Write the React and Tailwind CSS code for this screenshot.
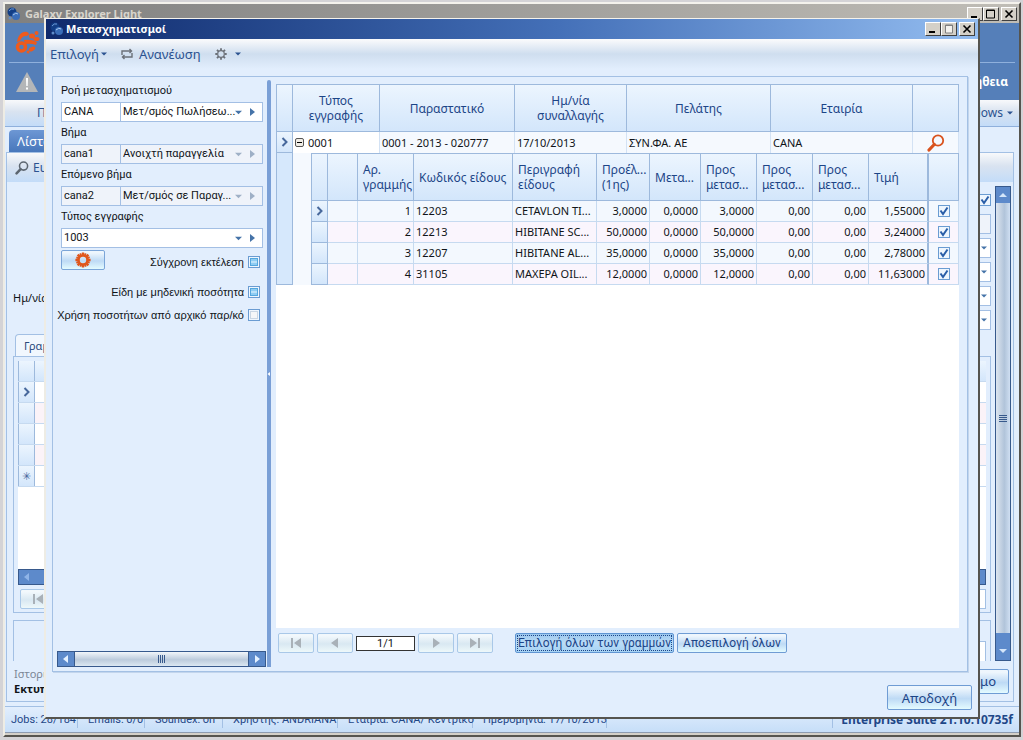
import React from "react";

const orders = [
  ["1", "12203", "CETAVLON TI...", "3,0000", "0,0000", "3,0000", "0,00", "0,00", "1,55000"],
  ["2", "12213", "HIBITANE SC...", "50,0000", "0,0000", "50,0000", "0,00", "0,00", "3,24000"],
  ["3", "12207", "HIBITANE AL...", "35,0000", "0,0000", "35,0000", "0,00", "0,00", "2,78000"],
  ["4", "31105", "MAXEPA OIL...", "12,0000", "0,0000", "12,0000", "0,00", "0,00", "11,63000"],
];

const headFill = "bg-linear-to-b from-[#ecf5fe] to-[#d3e6fb]";
const glossy = "bg-linear-to-b from-[#eef6fd] from-10% via-[#bedaf5] via-55% to-[#e4fbff]";
const disabledFill = "bg-linear-to-b from-[#f2f8fc] from-10% via-[#d9e8f2] via-55% to-[#edf8fa]";
const barFill = "bg-linear-to-b from-[#f8f9fb] via-[#d9e3f0] via-45% to-[#c3dcf8]";

function Globe() {
  return (
    <svg viewBox="0 0 14 14" className="size-3.5 shrink-0" aria-hidden="true">
      <circle cx="5" cy="5" r="4.5" fill="#123e86" />
      <path d="M2 4q2-3 5-2" stroke="#6f9bd8" fill="none" />
      <circle cx="9" cy="9" r="4" fill="#3a6db8" />
      <path d="M6 8q3-3 5-1" stroke="#a9c8ee" fill="none" />
      <circle cx="3" cy="11" r="1.5" fill="#5f8cca" />
    </svg>
  );
}

function WindowButtons({ name, disabledMax }) {
  const cls =
    "grid h-3.5 w-4 place-items-center border border-t-white border-l-white border-r-[#404040] border-b-[#404040] bg-[#d4d0c8]";
  return (
    <div className="flex">
      <button type="button" aria-label={"Ελαχιστοποίηση " + name} className={cls}>
        <svg viewBox="0 0 12 10" className="h-2.5 w-3"><path d="M2 7h6v2H2z" /></svg>
      </button>
      <button type="button" aria-label={"Μεγιστοποίηση " + name} className={cls}>
        <svg viewBox="0 0 12 10" className="h-2.5 w-3">
          {disabledMax ? (
            <path d="M2.500 1v8h7V1zM2 1.500h8" stroke="#808080" fill="#f4f2ee" />
          ) : (
            <path d="M1.500 1v8h8V1zM1 1.500h9" stroke="#000" fill="none" />
          )}
        </svg>
      </button>
      <button type="button" aria-label={"Κλείσιμο " + name} className={cls + " ml-0.5"}>
        <svg viewBox="0 0 12 10" className="h-2.5 w-3"><path d="M2.500 1.500l7 7m0-7l-7 7" stroke="#000" strokeWidth="1.600" /></svg>
      </button>
    </div>
  );
}

function Tri({ dir, className = "size-2" }) {
  const d = {
    down: "M0 2h8L4 6z",
    up: "M0 6h8L4 2z",
    left: "M6 0v8L1 4z",
    right: "M2 0v8l5-4z",
  }[dir];
  return (
    <svg viewBox="0 0 8 8" className={"shrink-0 " + className} aria-hidden="true">
      <path d={d} fill="currentColor" />
    </svg>
  );
}

function Chevron() {
  return (
    <svg viewBox="0 0 8 10" className="mx-auto h-2.5 w-2" aria-hidden="true">
      <path d="M1.500 1l4 4-4 4" fill="none" stroke="#47689c" strokeWidth="2" />
    </svg>
  );
}

function Magnifier({ className, color, width }) {
  return (
    <svg viewBox="0 0 18 18" className={className} aria-hidden="true">
      <circle cx="11" cy="6.500" r="5.200" fill="none" stroke={color} strokeWidth={width} />
      <path d="M7.200 10.500L2 16" stroke={color} strokeWidth="3.200" strokeLinecap="round" />
    </svg>
  );
}

function Gear({ className, color, inner, ring = 3 }) {
  return (
    <svg viewBox="-10 -10 20 20" className={className} aria-hidden="true">
      <circle r={inner} fill="none" stroke={color} strokeWidth={ring} />
      {[0, 45, 90, 135].map((a) => (
        <path key={a} transform={`rotate(${a})`} d="M-1.500-9.500h3v3.500h-3zM-1.500 6h3v3.500h-3z" fill={color} />
      ))}
      {ring >= 3 &&
        [22, 67, 112, 157].map((a) => (
          <path key={a} transform={`rotate(${a})`} d="M-1.200-9h2.400v3h-2.400zM-1.200 6h2.400v3h-2.400z" fill={color} />
        ))}
    </svg>
  );
}

function Tick({ state, label, id }) {
  return (
    <span className="relative grid size-3 shrink-0 place-items-center">
      <input
        id={id}
        type="checkbox"
        aria-label={label}
        defaultChecked={state !== "off"}
        className="size-3 appearance-none border border-[#6a9cd2] bg-[#eef6fe]"
      />
      {state === "on" && (
        <svg viewBox="0 0 12 12" className="pointer-events-none absolute size-3">
          <path d="M2.500 5.500L5 9l4.500-6.500" fill="none" stroke="#2a5ea8" strokeWidth="2" />
        </svg>
      )}
      {state === "mixed" && (
        <svg viewBox="0 0 12 12" className="pointer-events-none absolute size-3">
          <rect x="2.500" y="2.500" width="7" height="7" fill="#8fcdf3" stroke="#54a7de" />
          <path d="M3 6h6" stroke="#e8f7ff" />
        </svg>
      )}
      {state === "off" && (
        <svg viewBox="0 0 12 12" className="pointer-events-none absolute size-3">
          <rect x="2.500" y="2.500" width="7" height="7" fill="#f4f6f8" stroke="#c9d6e4" />
        </svg>
      )}
    </span>
  );
}

function Lookup({ label, id, code, text, muted }) {
  const tone = muted ? "bg-[#eff3fa]" : "bg-white";
  const arrow = muted ? "text-[#9fb0c6]" : "text-[#4573a8]";
  return (
    <div>
      <label htmlFor={id} className="flex h-[22px] items-center">{label}</label>
      <div className={"flex h-5 border border-[#a3bfe4] " + tone}>
        {text && (
          <input
            aria-label={label + " κωδικός"}
            defaultValue={code}
            className="w-[59px] shrink-0 border-r border-[#a3bfe4] px-0.5 outline-none"
          />
        )}
        <div className="relative min-w-0 flex-1">
          <select id={id} className="size-full appearance-none px-0.5 outline-none">
            <option>{text || code}</option>
          </select>
          <Tri dir="down" className={"pointer-events-none absolute top-1.5 right-0 size-[7px] " + arrow} />
        </div>
        <button type="button" aria-label={"Άνοιγμα " + label} className={"grid w-5 shrink-0 place-items-center " + arrow}>
          <Tri dir="right" />
        </button>
      </div>
    </div>
  );
}

function PagerButton({ kind, label }) {
  const d = {
    first: "M1 1h2v10H1zM11 1v10L4 6z",
    prev: "M9 1v10L2 6z",
    next: "M3 1v10l7-5z",
    last: "M9 1h2v10H9zM1 1v10l7-5z",
  }[kind];
  return (
    <button
      type="button"
      aria-label={label}
      className={"grid h-5 w-9 shrink-0 place-items-center rounded-xs border border-[#a9c8e8] text-[#a9b1b8] " + disabledFill}
    >
      <svg viewBox="0 0 12 12" className="size-3"><path d={d} fill="currentColor" /></svg>
    </button>
  );
}

function DetailGrid() {
  const th = "border-t border-r border-b border-[#9db9dc] px-[5px] text-left font-normal " + headFill;
  const td = "h-[21px] border-r border-b border-[#c6daf0] px-0.5 ";
  return (
    <table className="w-full table-fixed border-separate border-spacing-0 border-l border-[#9db9dc]">
      <colgroup>
        <col className="w-4" /><col className="w-[30px]" /><col className="w-14" /><col className="w-[99px]" />
        <col className="w-[84px]" /><col className="w-[53px]" /><col className="w-[51px]" /><col className="w-14" />
        <col className="w-14" /><col className="w-14" /><col className="w-[60px]" /><col className="w-[30px]" />
      </colgroup>
      <thead>
        <tr className="h-12 text-xs leading-[15px] text-[#1c4587]">
          <th className={th} /><th className={th} />
          <th className={th}>Αρ.<br />γραμμής</th>
          <th className={th}>Κωδικός είδους</th>
          <th className={th}>Περιγραφή είδους</th>
          <th className={th}>Προέλ...<br />(1ης)</th>
          <th className={th}>Μετα...</th>
          <th className={th}>Προς<br />μετασ...</th>
          <th className={th}>Προς<br />μετασ...</th>
          <th className={th}>Προς<br />μετασ...</th>
          <th className={th + " border-r-2"}>Τιμή</th>
          <th className={th} />
        </tr>
      </thead>
      <tbody>
        {orders.map((r, i) => (
          <tr key={r[1]} className={i % 2 ? "bg-[#faf5fd]" : "bg-[#f3f8fe]"}>
            <td className={"border-r border-b border-[#9db9dc] " + headFill}>{i === 0 && <Chevron />}</td>
            <td className={td} />
            <td className={td + "text-right"}>{r[0]}</td>
            <td className={td}>{r[1]}</td>
            <td className={td + "whitespace-nowrap overflow-hidden"}>{r[2]}</td>
            <td className={td + "text-right"}>{r[3]}</td>
            <td className={td + "text-right"}>{r[4]}</td>
            <td className={td + "text-right"}>{r[5]}</td>
            <td className={td + "text-right"}>{r[6]}</td>
            <td className={td + "text-right"}>{r[7]}</td>
            <td className="border-r-2 border-b border-r-[#9db9dc] border-b-[#c6daf0] px-0.5 text-right">{r[8]}</td>
            <td className={td}>
              <div className="flex justify-center"><Tick state="on" label={"Επιλογή γραμμής " + r[0]} /></div>
            </td>
          </tr>
        ))}
      </tbody>
    </table>
  );
}

function MasterGrid() {
  const th = "border-t border-r border-b border-[#9db9dc] px-2 text-center font-normal " + headFill;
  const td = "h-[21px] border-r border-[#d3e2f4] bg-[#f5f9fe] px-0.5";
  return (
    <table className="w-full table-fixed border-separate border-spacing-0 border-l border-[#9db9dc]">
      <colgroup>
        <col className="w-4" /><col className="w-[87px]" /><col className="w-[135px]" /><col className="w-28" />
        <col className="w-36" /><col className="w-[142px]" /><col className="w-[46px]" />
      </colgroup>
      <thead>
        <tr className="h-12 text-xs leading-[15px] text-[#1c4587]">
          <th className={th} />
          <th className={th}>Τύπος εγγραφής</th>
          <th className={th}>Παραστατικό</th>
          <th className={th}>Ημ/νία συναλλαγής</th>
          <th className={th}>Πελάτης</th>
          <th className={th}>Εταιρία</th>
          <th className={th} />
        </tr>
      </thead>
      <tbody>
        <tr>
          <td className={"border-r border-b border-[#9db9dc] " + headFill}><Chevron /></td>
          <td className="border-r border-[#d3e2f4] bg-white px-0.5">
            <div className="flex items-center gap-1">
              <button type="button" aria-label="Σύμπτυξη" className="grid size-[9px] place-items-center rounded-xs border border-[#555] bg-[#f0ede6]">
                <span className="h-px w-[5px] bg-black" />
              </button>
              0001
            </div>
          </td>
          <td className={td}>0001 - 2013 - 020777</td>
          <td className={td}>17/10/2013</td>
          <td className={td}>ΣΥΝ.ΦΑ. ΑΕ</td>
          <td className={td}>CANA</td>
          <td className={td}>
            <button type="button" aria-label="Αναζήτηση" className="mx-auto block">
              <Magnifier className="size-[18px]" color="#d9531e" width="1.800" />
            </button>
          </td>
        </tr>
        <tr>
          <td className="border-r border-b border-[#9db9dc] bg-[#d6e8fc]" />
          <td colSpan={6} className="bg-[#f5f9fe] pl-[18px]"><DetailGrid /></td>
        </tr>
      </tbody>
    </table>
  );
}

function Dialog() {
  return (
    <section
      aria-label="Μετασχηματισμοί"
      className="absolute top-[18px] right-[43px] bottom-[21px] left-[44px] flex flex-col border-t border-r-2 border-b-2 border-l-2 border-t-[#f4f2ec] border-r-[#55544f] border-b-[#55544f] border-l-[#eeece4] bg-[#e2eefd]"
    >
      <header className="flex h-5 shrink-0 items-center gap-0.5 bg-linear-to-r from-[#102a6c] via-[#4470b8] via-55% to-[#94bdf0] pr-[3px] pl-1 text-white">
        <Globe />
        <h1 className="flex-1 text-[11px] font-bold">Μετασχηματισμοί</h1>
        <WindowButtons name="διαλόγου" disabledMax />
      </header>
      <nav className="flex h-[30px] shrink-0 items-center gap-3.5 bg-linear-to-b from-[#fbfbfc] via-[#cfdeef] via-50% to-[#e2eefd] px-1 text-[13px] text-[#2b5290]">
        <button type="button" className="flex items-center gap-0.5">Επιλογή <Tri dir="down" className="size-1.5" /></button>
        <button type="button" className="flex items-center gap-1.5">
          <svg viewBox="0 0 12 12" className="size-3" fill="none" stroke="#6b7078" strokeWidth="1.400">
            <path d="M1 7V3h9.500M8.500 1l2 2-2 2M11 5v4H1.500M3.500 7l-2 2 2 2" />
          </svg>
          Ανανέωση
        </button>
        <button type="button" aria-label="Ρυθμίσεις" className="flex items-center gap-2">
          <Gear className="size-3" color="#6b7078" inner="5.500" ring={2} />
          <Tri dir="down" className="size-1.5" />
        </button>
      </nav>
      <div className="mx-1.5 mt-[7px] mr-2.5 flex min-h-0 flex-1 border border-[#a3c0e4] pt-[3px] shadow-[1px_1px_0_#c3d5ec]">
        <aside className="flex w-[214px] shrink-0 flex-col pr-px font-[Roboto,sans-serif]">
          <form className="flex min-h-0 flex-1 flex-col pr-[3px] pl-2" onSubmit={(e) => e.preventDefault()}>
            <Lookup id="flow" label="Ροή μετασχηματισμού" code="CANA" text="Μετ/σμός Πωλήσεω..." />
            <Lookup id="step" label="Βήμα" code="cana1" text="Ανοιχτή παραγγελία" muted />
            <Lookup id="next" label="Επόμενο βήμα" code="cana2" text="Μετ/σμός σε Παραγ..." muted />
            <Lookup id="type" label="Τύπος εγγραφής" code="1003" />
            <div className="font-['Liberation_Sans',sans-serif]">
              <div className="mt-0.5 flex items-start justify-between pr-[3px]">
                <button type="button" aria-label="Εκτέλεση" className={"grid h-5 w-11 place-items-center rounded-xs border border-[#7ba5d8] " + glossy}>
                  <Gear className="size-4" color="#e0571c" inner="5.500" />
                </button>
                <label className="flex items-center gap-1 pt-1">Σύγχρονη εκτέλεση <Tick state="mixed" /></label>
              </div>
              <label className="mt-3 flex h-5 items-center justify-end gap-1 pr-[3px]">Είδη με μηδενική ποσότητα <Tick state="mixed" /></label>
              <label className="mt-[3px] flex h-5 items-center justify-end gap-1 pr-[3px] whitespace-nowrap">Χρήση ποσοτήτων από αρχικό παρ/κό <Tick state="off" /></label>
            </div>
          </form>
          <div className="mb-1 ml-1 flex h-4 border border-[#37598c] bg-[#5d8acb] text-[#e3f0ff]">
            <button type="button" aria-label="Κύλιση αριστερά" className="grid w-4 place-items-center"><Tri dir="left" /></button>
            <div className="flex flex-1 items-center justify-center gap-px border-x border-[#37598c] bg-linear-to-b from-[#f2f6fa] via-[#bccbdc] via-55% to-[#dbe7f2]">
              <span className="h-2 w-px bg-[#37598c]" /><span className="h-2 w-px bg-[#37598c]" />
              <span className="h-2 w-px bg-[#37598c]" /><span className="h-2 w-px bg-[#37598c]" />
            </div>
            <button type="button" aria-label="Κύλιση δεξιά" className="grid w-4 place-items-center"><Tri dir="right" /></button>
          </div>
        </aside>
        <div className="mb-1 flex w-1 shrink-0 items-center rounded-t-sm bg-[#7a9fd6] text-white"><Tri dir="left" className="size-1" /></div>
        <main className="flex min-w-0 flex-1 flex-col pt-1 pr-2 pl-[5px]">
          <div className="min-h-0 flex-1 bg-white"><MasterGrid /></div>
          <div className="flex h-[43px] shrink-0 items-start gap-[3px] pt-[5px] pl-0.5">
            <PagerButton kind="first" label="Πρώτη" />
            <PagerButton kind="prev" label="Προηγούμενη" />
            <input aria-label="Σελίδα" defaultValue="1/1" className="mt-[3px] h-[15px] w-[59px] border border-[#333] bg-white text-center font-[Roboto,sans-serif]" />
            <PagerButton kind="next" label="Επόμενη" />
            <PagerButton kind="last" label="Τελευταία" />
            <button type="button" className="ml-[19px] h-5 w-[159px] rounded-xs border border-[#5f95d3] bg-linear-to-b from-[#9cc7ee] via-[#badcf7] to-[#a5d2f4] p-px font-[Roboto,sans-serif] text-xs whitespace-nowrap text-[#1c4587]">
              <span className="flex h-4 items-center justify-center border border-dotted border-[#1c4587]">Επιλογή όλων των γραμμών</span>
            </button>
            <button type="button" className={"h-5 w-[110px] rounded-xs border border-[#6f9cd4] font-[Roboto,sans-serif] text-xs whitespace-nowrap text-[#1c4587] " + glossy}>
              Αποεπιλογή όλων
            </button>
          </div>
        </main>
      </div>
      <footer className="flex shrink-0 justify-end px-1.5 pt-[13px] pb-[7px]">
        <button type="button" className={"h-[25px] w-[85px] rounded-xs border border-[#6f9cd4] text-[13px] text-[#1c4587] " + glossy}>Αποδοχή</button>
      </footer>
    </section>
  );
}

function BackRow({ first }) {
  return (
    <div className="flex justify-end">
      <div className={"flex h-5 w-40 items-center justify-end border border-[#a3bfe4] pr-[3px] text-[#4573a8] " + (first ? "bg-[#eff3fa]" : "bg-white")}>
        {!first && <Tri dir="down" className="size-1.5" />}
      </div>
    </div>
  );
}

function MainWindow() {
  return (
    <section aria-label="Galaxy Explorer Light" className="flex h-full flex-col border-2 border-t-[#f4f2ec] border-r-[#55544f] border-b-[#55544f] border-l-[#eeece4] bg-[#e2eefd]">
      <header className="flex h-[19px] shrink-0 items-center gap-1 bg-linear-to-r from-[#808080] to-[#c0bdb6] px-0.5 text-[#d8d4cc]">
        <Globe />
        <h2 className="flex-1 text-[11px] font-bold">Galaxy Explorer Light</h2>
        <WindowButtons name="εφαρμογής" />
      </header>
      <div className="flex h-[77px] shrink-0 flex-col bg-[#557fb9] px-1">
        <div className="flex h-10 items-center border-b border-[#8fb0dc] px-1.5">
          <svg viewBox="0 0 26 26" className="size-[26px]" fill="#ee5a1c" aria-hidden="true">
            <path d="M2 12C3 5 7 1 12 2c3 1 2 4-1 4C8 6 6 8 5 11z" />
            <circle cx="6.500" cy="17" r="4" fill="none" stroke="#ee5a1c" strokeWidth="3.500" />
            <ellipse cx="17" cy="6" rx="3" ry="2.500" />
            <circle cx="21.500" cy="3" r="2" />
            <ellipse cx="21.500" cy="9" rx="3" ry="2" />
            <path d="M9 10q7-1 13 2l-1 3q-5-2-11-1z" />
            <ellipse cx="17" cy="19" rx="3.500" ry="2" transform="rotate(-30 17 19)" />
            <circle cx="13" cy="22" r="1.500" />
          </svg>
        </div>
        <div className="flex flex-1 items-center justify-between px-[7px]">
          <svg viewBox="0 0 22 20" className="h-5 w-[22px]" aria-hidden="true">
            <path d="M11 0l11 20H0z" fill="#b4b6b8" /><path d="M10 6h2l-.3 8h-1.400zM10 15.500h2v2h-2z" fill="#fff" />
          </svg>
          <span className="text-xs font-bold text-white">Βοήθεια</span>
        </div>
      </div>
      <nav className={"flex h-[27px] shrink-0 items-center justify-between border-b border-[#8fb0dc] pr-1.5 pl-8 text-xs text-[#2b5290] " + barFill}>
        <a href="#p">Π</a>
        <a href="#windows" className="flex items-center gap-1">Windows <Tri dir="down" className="size-1.5" /></a>
      </nav>
      <div className="flex min-h-0 flex-1 flex-col pt-[3px] pb-1">
        <div className="ml-1 flex h-[22px] w-24 shrink-0 items-center rounded-t-sm bg-linear-to-b from-[#6d97d4] to-[#4877bb] px-2 text-[13px] text-white">Λίστα</div>
        <div className="mr-[5px] ml-px flex min-h-0 flex-1 flex-col border border-[#a3c0e4]">
          <div className={"flex h-[29px] shrink-0 items-center gap-1 px-2 text-xs text-[#2b5290] " + barFill}>
            <Magnifier className="size-3.5" color="#5c6670" width="2" />
            Ευρ.
          </div>
          <div className="flex min-h-0 flex-1 pt-1">
            <div className="flex min-w-0 flex-1 flex-col pr-1 pl-1.5">
              <div className="flex h-7 items-center justify-end"><Tick state="on" label="Ενεργό" /></div>
              <div className="flex flex-col gap-1">
                <BackRow first /><BackRow /><BackRow /><BackRow /><BackRow />
              </div>
              <div className="-mt-10 h-11">Ημ/νία</div>
              <div className="ml-0.5 flex h-[22px] w-16 shrink-0 items-center rounded-t-sm border border-b-0 border-[#a3c0e4] bg-[#f1f7fe] px-2 text-[#2b4a7c]">Γραμ.</div>
              <div className="flex min-h-0 flex-1 flex-col border border-[#a3c0e4] px-1 pt-1 pb-[3px]">
                <div className="min-h-0 flex-1 bg-white">
                  {["h", "a", "b", "c", "d", "n"].map((k) => (
                    <div key={k} className="flex h-[21px] border-b border-[#c6daf0]">
                      <span className={"grid w-[17px] place-items-center border-x border-[#9db9dc] text-[#47689c] " + headFill}>
                        {k === "a" && <Chevron />}
                        {k === "n" && "✳"}
                      </span>
                      <span className={"flex-1 " + (k === "h" ? headFill : k === "b" || k === "d" ? "bg-[#fbf3f8]" : "")} />
                    </div>
                  ))}
                </div>
                <div className="flex h-4 shrink-0 items-center border border-[#37598c] bg-[#5d8acb] px-1 text-[#8fb4e8]"><Tri dir="left" /></div>
                <div className="mt-1 flex h-5 shrink-0 justify-between pl-0.5">
                  <PagerButton kind="first" label="Αρχή" />
                  <span className="w-20 border border-[#a3c0e4] bg-white" />
                </div>
              </div>
              <div className="mt-[7px] flex h-[41px] shrink-0 items-end justify-end border border-b-0 border-[#a3c0e4] pr-1">
                <span className="h-5 w-20 border border-b-0 border-[#a3c0e4] bg-white" />
              </div>
            </div>
            <div className="mr-0.5 flex w-4 shrink-0 flex-col border border-[#37598c] bg-[#5d8acb] text-[#d5e6fa]">
              <button type="button" aria-label="Πάνω" className="grid h-4 place-items-center"><Tri dir="up" /></button>
              <div className="flex flex-1 flex-col items-center justify-center gap-px bg-linear-to-r from-[#dde5ef] via-[#b1c4da] via-60% to-[#cfdff2]">
                <span className="h-px w-2 bg-[#37598c]" /><span className="h-px w-2 bg-[#37598c]" />
                <span className="h-px w-2 bg-[#37598c]" /><span className="h-px w-2 bg-[#37598c]" />
              </div>
              <button type="button" aria-label="Κάτω" className="grid h-[27px] place-items-center pt-2"><Tri dir="down" /></button>
            </div>
          </div>
          <div className="flex h-10 shrink-0 items-center justify-between pr-1 pl-[7px]">
            <div className="flex flex-col leading-[15px]">
              <span className="text-[#7c8796]">Ιστορικό</span>
              <span className="font-bold">Εκτυπώσεις</span>
            </div>
            <button type="button" className={"h-[25px] w-[85px] rounded-xs border border-[#6f9cd4] pr-3 text-right text-[13px] text-[#1c4587] " + glossy}>Κλείσιμο</button>
          </div>
        </div>
      </div>
      <footer className="flex h-[26px] shrink-0 items-center border-t border-[#a3c0e4] bg-linear-to-b from-[#e2eefd] to-[#c6def8] px-1.5 font-[Roboto,sans-serif] whitespace-nowrap text-[#1f4788]">
        <span className="w-[67px] border-r border-[#a3c0e4]">Jobs: 28/184</span>
        <span className="w-[67px] border-r border-[#a3c0e4] pl-2.5">Emails: 0/0</span>
        <span className="w-[78px] border-r border-[#a3c0e4] pl-2.5">Soundex: on</span>
        <span className="w-[115px] border-r border-[#a3c0e4] pl-2.5">Χρήστης: ANDRIANA</span>
        <span className="w-[135px] border-r border-[#a3c0e4] pl-2.5">Εταιρία: CANA/ Κεντρικό</span>
        <span className="w-[134px] border-r border-[#a3c0e4] pl-2.5">Ημερομηνία: 17/10/2013</span>
        <span className="ml-auto border-l border-[#a3c0e4] pl-2 font-['Noto_Sans',sans-serif] text-xs font-bold">Enterprise Suite 21.10.10735f</span>
      </footer>
      <div className="h-[3px] shrink-0 border-t border-[#8d9bb0] bg-[#d4d0c8]" />
    </section>
  );
}

export default function App() {
  return (
    <div className="relative h-screen overflow-hidden bg-[#d4d3d6] pt-[2px] pr-[2px] pb-[3px] pl-[3px] font-['Noto_Sans',sans-serif] text-[11px] leading-4 text-[#101418]">
      <MainWindow />
      <Dialog />
    </div>
  );
}
